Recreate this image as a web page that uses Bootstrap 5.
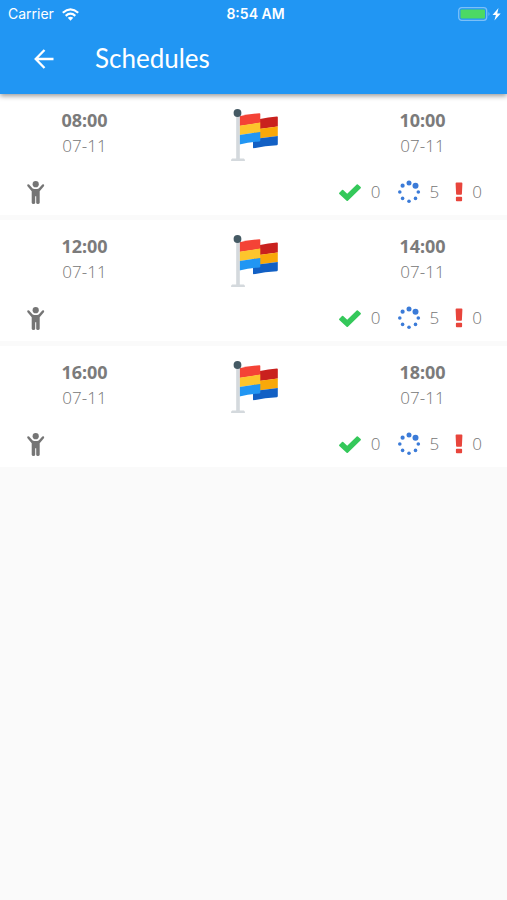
<!DOCTYPE html>
<html lang="en">
<head>
<meta charset="utf-8">
<meta name="viewport" content="width=device-width, initial-scale=1">
<title>Schedules</title>
<link href="https://cdn.jsdelivr.net/npm/bootstrap@5.3.0/dist/css/bootstrap.min.css" rel="stylesheet">
<style>
body { background: #fafafa; font-family: Lato, "Open Sans", sans-serif; color: #757575; }
svg { display: block; }
.app-header { background: #2196f3; color: #fff; box-shadow: 0 2px 5px rgba(0,0,0,.4); z-index: 2; }
.status-bar { height: 28px; padding: 0 4px 0 8px; font: 14px/28px Inter, sans-serif; }
.status-bar .clock { font-weight: 600; }
.title-bar { height: 66px; padding: 0 28px 4px; gap: 36px; }
.title-bar h1 { font-size: 26px; line-height: 32px; font-weight: 400; padding-bottom: 2px; }
.back-btn { width: 31px; height: 32px; }
.trips { gap: 5px; }
.trip { background: #fff; height: 121px; }
.trip-top { height: 75px; padding-top: 14px; }
.hour { font: 700 18px/24px "Noto Sans", sans-serif; color: #7b7b7b; }
.day { font: 300 17px/28px "Open Sans", sans-serif; }
.trip-bottom { height: 46px; padding: 0 25px 0 26px; }
.counts { font: 300 17px/24px "Open Sans", sans-serif; gap: 16px; }
.counts span { gap: 9px; }
</style>
<script src="https://cdn.jsdelivr.net/npm/bootstrap@5.3.0/dist/js/bootstrap.bundle.min.js"></script>
</head>
<body>
<svg class="d-none" aria-hidden="true">
  <symbol id="flag" viewBox="0 0 48 54">
    <path fill="#c9211e" d="M30 11q8-2 17-2.500q.8 0 .8.800v9.200l-18 2.500z"/>
    <path fill="#f9a809" d="M24 21.500l23.800-3v9.500L24 31z"/>
    <path fill="#1260c4" d="M23 31l24.800-3v8q0 1-.8 1.200-12 .5-23.200 3-.8 0-.8-.8z"/>
    <path fill="#f44336" d="M9.500 8.200Q19 6 29.500 5.300q.8 0 .8.800v8.600L9.500 18z"/>
    <path fill="#fdc52c" d="M9.500 17.700l20.800-3.200V24L9.500 27z"/>
    <path fill="#2196f3" d="M9.500 27l20.800-3v8.500q0 .8-.8.900-10 .6-20 3z"/>
    <path fill="#d4d9dd" d="M6.200 6h3.600v44.500h4q1.200 0 1.200 2.500H1q0-2.500 1.200-2.500h4z"/>
    <circle cx="7.500" cy="5" r="3.900" fill="#455a64"/>
  </symbol>
  <symbol id="person" viewBox="0 0 20 24">
    <circle cx="9.700" cy="4.200" r="3.100"/>
    <path d="M3.100 4.600l3.600 4q3 1 6 0l3.600-4q.9-.7 1.600 0t0 1.600l-4.200 5v11.500q-.2 1.200-1.800 1.200t-1.700-1.200v-6.400H9.200v6.400q-.1 1.200-1.700 1.200t-1.800-1.200V11.200l-4.200-5q-.7-.9 0-1.600t1.600 0z"/>
  </symbol>
  <symbol id="check" viewBox="0 0 24 20">
    <path d="M1.300 10.800L4 8q.6-.5 1.200 0l4 3.800 9.500-9.400q.6-.5 1.200 0l2.800 2.700q.5.600 0 1.200L9.900 18.700q-.7.500-1.300 0L1.300 12q-.6-.6 0-1.200z" fill="#34c85a"/>
  </symbol>
  <symbol id="spinner" viewBox="0 0 24 24">
    <g fill="#3b7bd8"><circle cx="12" cy="3" r="2.500"/><circle cx="18.500" cy="5.700" r="3"/><circle cx="5.600" cy="5.700" r="2.100"/><circle cx="2.800" cy="12" r="1.800"/><circle cx="21.300" cy="12" r="1.800"/><circle cx="5.600" cy="18.400" r="1.800"/><circle cx="18.500" cy="18.400" r="1.800"/><circle cx="12" cy="21.200" r="1.800"/></g>
  </symbol>
  <symbol id="alert" viewBox="0 0 8 20">
    <path fill="#e8453c" d="M1.500.5h5q.9 0 .9.900l-.5 10.500q0 .8-.8.800H1.900q-.8 0-.8-.8L.6 1.400q0-.9.900-.9zM1.800 14.700h4.400q.9 0 .9.900v2.700q0 .9-.9.900H1.800q-.9 0-.9-.9v-2.700q0-.9.900-.9z"/>
  </symbol>
</svg>

<header class="app-header position-relative">
  <div class="status-bar row g-0 align-items-center">
    <div class="col d-flex align-items-center gap-2"><span>Carrier</span>
      <svg width="17" height="13" viewBox="0 0 17 13" fill="none" stroke="#fff" stroke-width="2.200" aria-label="Wi-Fi"><path d="M.8 4.800Q8.500-2 16.200 4.800M3.700 7.800q4.800-4.200 9.600 0"/><path fill="#fff" stroke="none" d="M5.700 9.800q2.800-2.200 5.600 0l-2.800 2.900z"/></svg>
    </div>
    <div class="col-auto clock">8:54 AM</div>
    <div class="col d-flex justify-content-end">
      <svg width="45" height="14" viewBox="0 0 45 14" aria-label="Battery charging"><rect x=".7" y=".7" width="28" height="12.600" rx="3" fill="none" stroke="#7bc0f8" stroke-width="1.300"/><rect x="2.500" y="2.500" width="24.500" height="9" rx="1" fill="#4cd964"/><path d="M30.500 5q2 2 0 4z" fill="#7bc0f8"/><path d="M40.500 1l-6 7h3.400l-1.500 5.500 6.300-7h-3.500z" fill="#fff"/></svg>
    </div>
  </div>
  <div class="title-bar d-flex align-items-center">
    <button type="button" class="back-btn btn p-0 border-0 d-flex align-items-center justify-content-center" aria-label="Back">
      <svg width="20" height="20" viewBox="0 0 20 20" fill="none" stroke="#fff" stroke-width="2.300"><path d="M19.500 10H2M10.500 1L1.700 10l8.800 9"/></svg>
    </button>
    <h1 class="m-0">Schedules</h1>
  </div>
</header>

<main class="trips d-flex flex-column">
  <article class="trip">
    <div class="trip-top row g-0 text-center">
      <div class="col"><div class="hour">08:00</div><div class="day">07-11</div></div>
      <div class="col d-flex justify-content-center"><svg width="48" height="54"><use href="#flag"/></svg></div>
      <div class="col"><div class="hour">10:00</div><div class="day">07-11</div></div>
    </div>
    <div class="trip-bottom d-flex align-items-center justify-content-between">
      <svg width="20" height="24" fill="#757575"><use href="#person"/></svg>
      <div class="counts d-flex">
        <span class="d-flex align-items-center"><svg width="24" height="20"><use href="#check"/></svg>0</span>
        <span class="d-flex align-items-center"><svg width="24" height="24"><use href="#spinner"/></svg>5</span>
        <span class="d-flex align-items-center"><svg width="8" height="20"><use href="#alert"/></svg>0</span>
      </div>
    </div>
  </article>
  <article class="trip">
    <div class="trip-top row g-0 text-center">
      <div class="col"><div class="hour">12:00</div><div class="day">07-11</div></div>
      <div class="col d-flex justify-content-center"><svg width="48" height="54"><use href="#flag"/></svg></div>
      <div class="col"><div class="hour">14:00</div><div class="day">07-11</div></div>
    </div>
    <div class="trip-bottom d-flex align-items-center justify-content-between">
      <svg width="20" height="24" fill="#757575"><use href="#person"/></svg>
      <div class="counts d-flex">
        <span class="d-flex align-items-center"><svg width="24" height="20"><use href="#check"/></svg>0</span>
        <span class="d-flex align-items-center"><svg width="24" height="24"><use href="#spinner"/></svg>5</span>
        <span class="d-flex align-items-center"><svg width="8" height="20"><use href="#alert"/></svg>0</span>
      </div>
    </div>
  </article>
  <article class="trip">
    <div class="trip-top row g-0 text-center">
      <div class="col"><div class="hour">16:00</div><div class="day">07-11</div></div>
      <div class="col d-flex justify-content-center"><svg width="48" height="54"><use href="#flag"/></svg></div>
      <div class="col"><div class="hour">18:00</div><div class="day">07-11</div></div>
    </div>
    <div class="trip-bottom d-flex align-items-center justify-content-between">
      <svg width="20" height="24" fill="#757575"><use href="#person"/></svg>
      <div class="counts d-flex">
        <span class="d-flex align-items-center"><svg width="24" height="20"><use href="#check"/></svg>0</span>
        <span class="d-flex align-items-center"><svg width="24" height="24"><use href="#spinner"/></svg>5</span>
        <span class="d-flex align-items-center"><svg width="8" height="20"><use href="#alert"/></svg>0</span>
      </div>
    </div>
  </article>
</main>
</body>
</html>
